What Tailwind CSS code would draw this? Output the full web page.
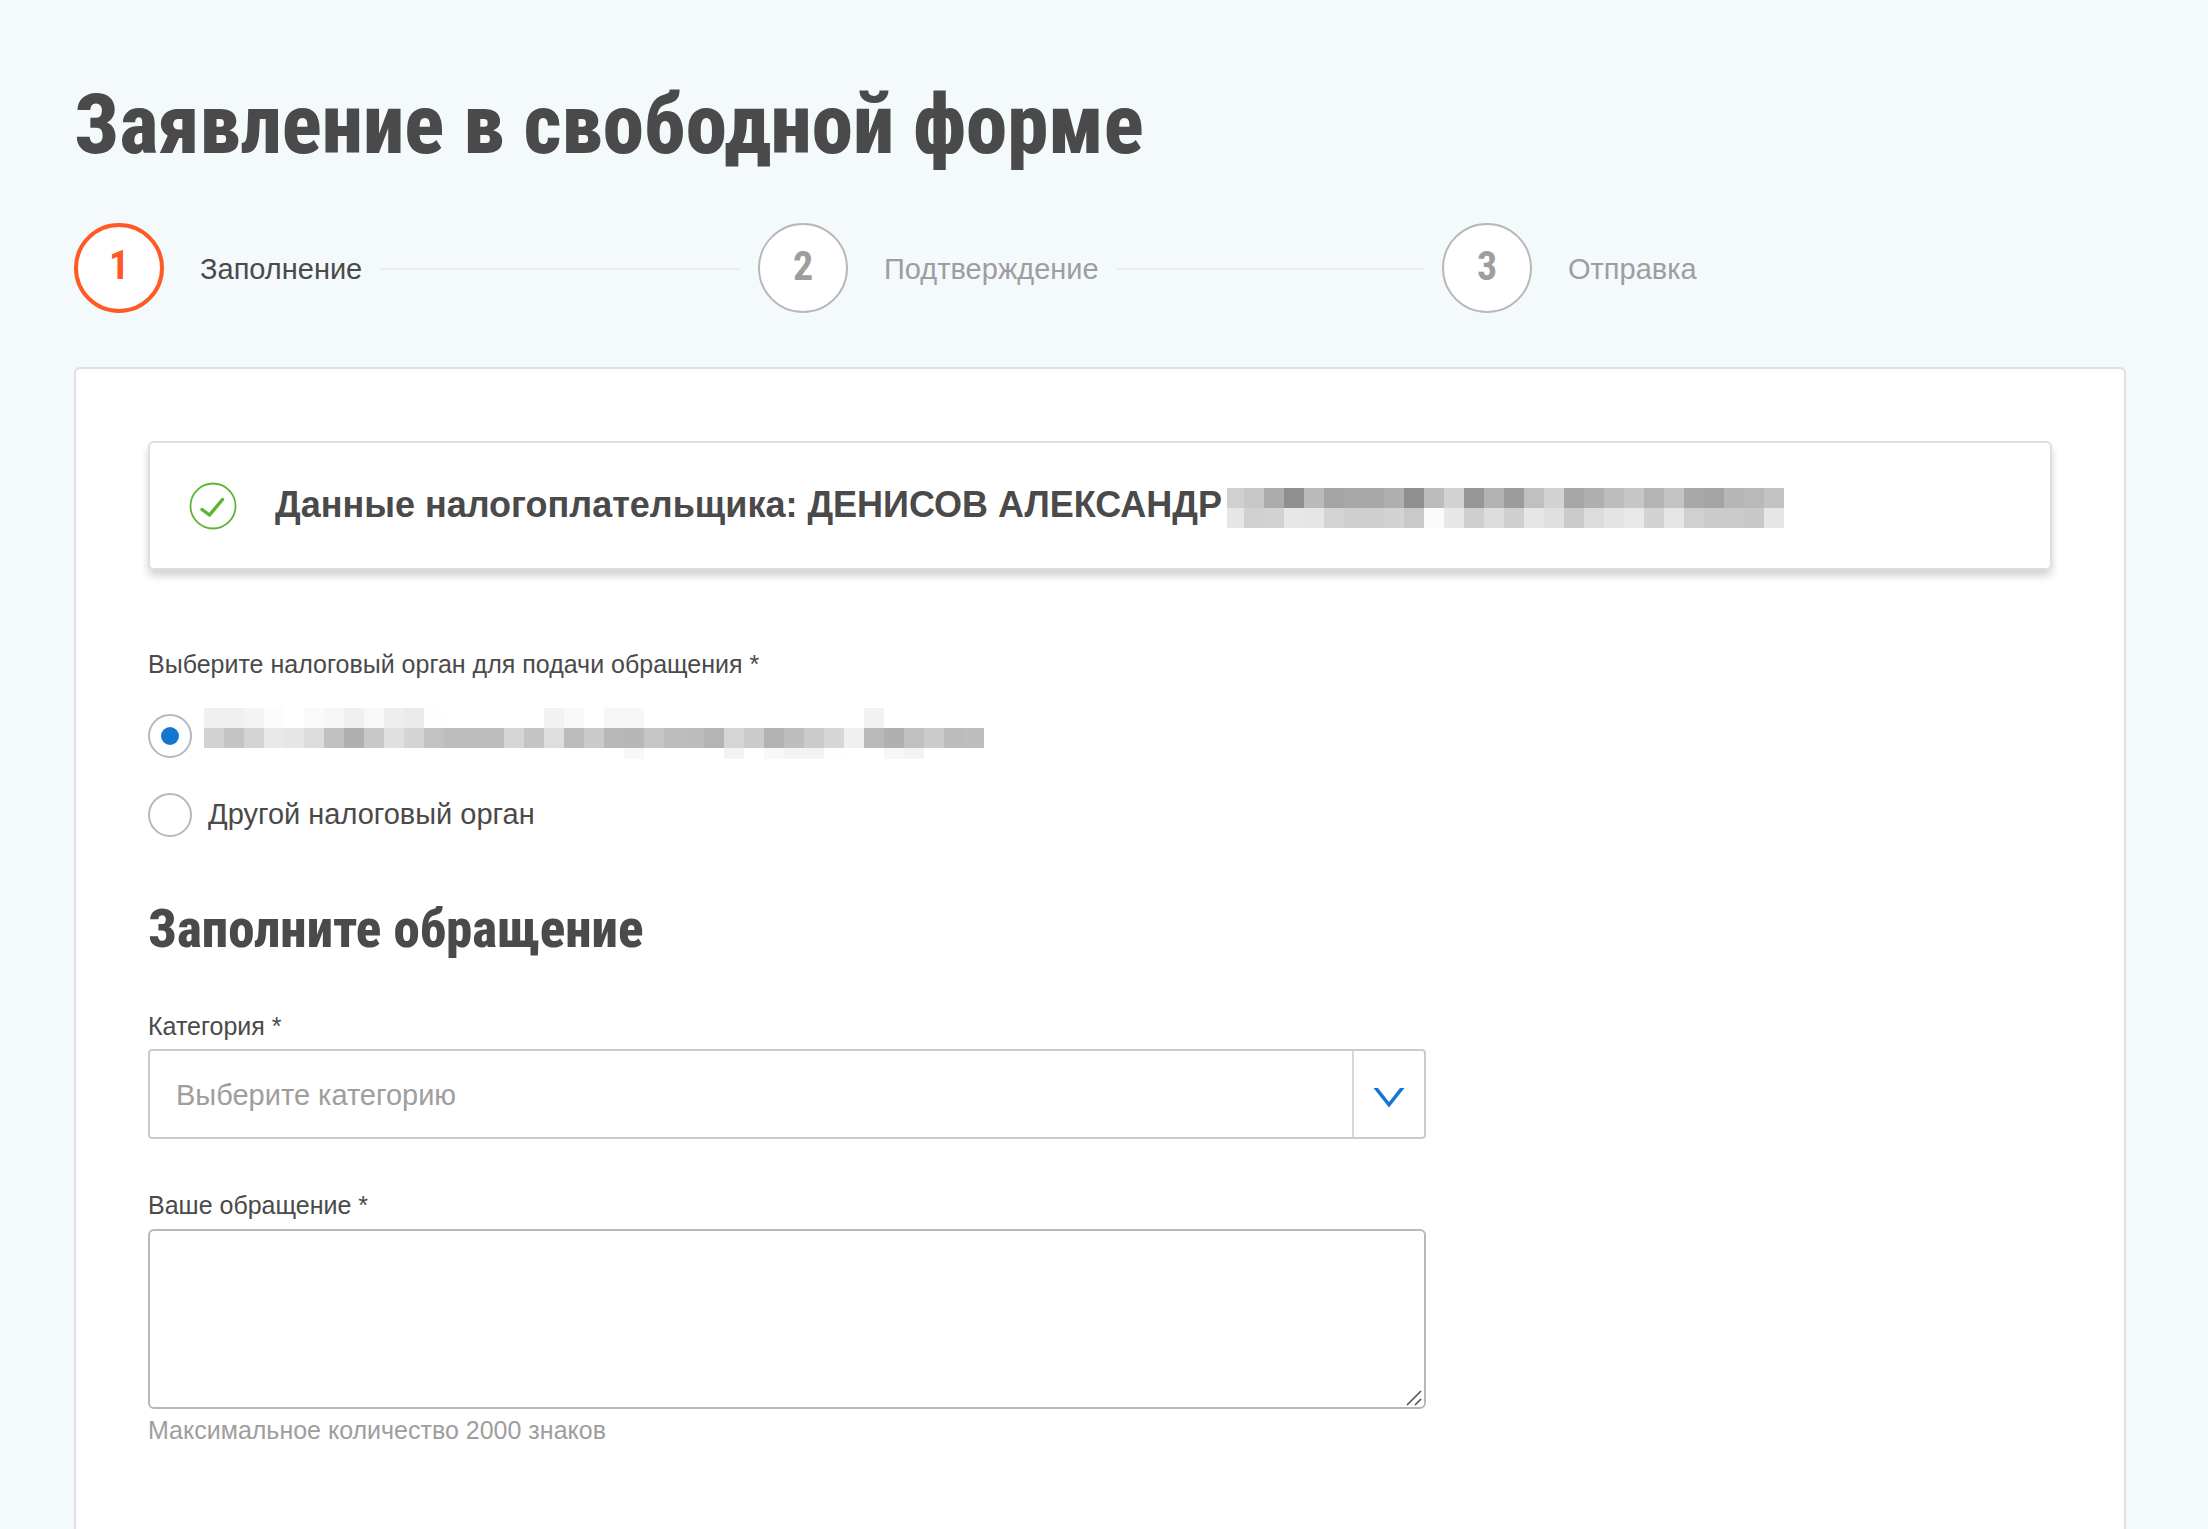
<!DOCTYPE html>
<html lang="ru">
<head>
  <meta charset="UTF-8">
  <meta name="viewport" content="width=device-width, initial-scale=1.0">
  <title>Заявление в свободной форме</title>
  <script src="https://cdn.jsdelivr.net/npm/@tailwindcss/browser@4"></script>
</head>
<body class="bg-[#f4f9fc] min-h-screen flex flex-col pt-[75px] pl-[74px] pr-[82px] font-['Liberation_Sans',Arial,sans-serif] text-[#4a4a4a]">

  <h1 class="font-['Roboto_Condensed','Liberation_Sans',sans-serif] font-extrabold text-[83px] leading-[100px]">Заявление в свободной форме</h1>

  <!-- Steps -->
  <ol class="grid grid-cols-3 mt-12 text-[29px] leading-8">
    <li class="flex items-center" aria-current="step">
      <span class="size-[90px] shrink-0 rounded-full border-4 border-[#ff5a26] bg-white flex items-center justify-center pb-1 font-['Roboto_Condensed','Liberation_Sans',sans-serif] font-bold text-[40px] text-[#ff5a26]">1</span>
      <div class="flex-1 flex items-center pt-[2px]">
        <span class="ml-9">Заполнение</span>
        <span class="h-[2px] flex-1 mx-[18px] bg-[#ebebeb]"></span>
      </div>
    </li>
    <li class="flex items-center text-[#9e9e9e]">
      <span class="size-[90px] shrink-0 rounded-full border-2 border-[#b8b8b8] bg-white flex items-center justify-center pb-[2px] font-['Roboto_Condensed','Liberation_Sans',sans-serif] font-bold text-[40px]">2</span>
      <div class="flex-1 flex items-center pt-[2px]">
        <span class="ml-9">Подтверждение</span>
        <span class="h-[2px] flex-1 mx-[18px] bg-[#ebebeb]"></span>
      </div>
    </li>
    <li class="flex items-center text-[#9e9e9e]">
      <span class="size-[90px] shrink-0 rounded-full border-2 border-[#b8b8b8] bg-white flex items-center justify-center pb-[2px] font-['Roboto_Condensed','Liberation_Sans',sans-serif] font-bold text-[40px]">3</span>
      <div class="flex-1 flex items-center pt-[2px]">
        <span class="ml-9">Отправка</span>
      </div>
    </li>
  </ol>

  <form class="mt-[54px] flex-1 bg-white border-2 border-b-0 border-[#dfe0e0] rounded-t-md px-[72px] pt-[72px] pb-[72px]">

    <!-- Taxpayer -->
    <div class="flex items-center border-2 border-[#dedede] rounded-md px-[39px] py-[38px] shadow-[0_6px_8px_rgba(0,0,0,0.18)]">
      <svg class="size-12 shrink-0" viewBox="0 0 48 48" fill="none" stroke="#5cb531" aria-hidden="true">
        <circle cx="24" cy="24" r="22.5" stroke-width="1.8"/>
        <path d="M13 27.5L20.5 33L33.5 17.5" stroke-width="3.4" stroke-linecap="round"/>
      </svg>
      <h2 class="ml-[38px] pb-[2px] font-bold text-[36px] leading-[47px] whitespace-nowrap">Данные налогоплательщика: ДЕНИСОВ АЛЕКСАНДР</h2>
      <div id="nameMask" class="ml-[5px] mt-1 flex flex-col" aria-hidden="true"></div>
    </div>

    <!-- Tax office -->
    <fieldset class="mt-[78px]">
      <legend class="text-[25px] leading-8">Выберите налоговый орган для подачи обращения *</legend>
      <div class="flex items-center h-[60px] mt-[26px]">
        <input type="radio" id="office1" name="office" checked aria-label="Налоговый орган" class="appearance-none size-11 shrink-0 rounded-full border-2 border-[#b8b8b8] bg-white flex items-center justify-center checked:before:block checked:before:size-[18px] checked:before:rounded-full checked:before:bg-[#1276d2]">
        <label for="office1" id="officeMask" class="ml-3 mb-[5px] h-[51px] overflow-hidden flex flex-col"></label>
      </div>
      <div class="flex items-center h-[60px] mt-[19px]">
        <input type="radio" id="office2" name="office" class="appearance-none size-11 shrink-0 rounded-full border-2 border-[#b8b8b8] bg-white flex items-center justify-center checked:before:block checked:before:size-[18px] checked:before:rounded-full checked:before:bg-[#1276d2]">
        <label for="office2" class="ml-4 pb-[2px] text-[29px] leading-8">Другой налоговый орган</label>
      </div>
    </fieldset>

    <h2 class="mt-12 font-['Roboto_Condensed','Liberation_Sans',sans-serif] font-extrabold text-[53px] leading-[72px]">Заполните обращение</h2>

    <div class="mt-[45px] max-w-[1278px]">
      <label for="category" class="block text-[25px] leading-8">Категория *</label>
      <div class="relative mt-[7px]">
        <select id="category" class="appearance-none block w-full h-[90px] rounded-sm border-2 border-[#cbcbcb] bg-white pt-1 pl-[26px] pr-20 text-[29px] text-[#9e9e9e]">
          <option>Выберите категорию</option>
        </select>
        <span class="absolute inset-y-[2px] right-[2px] w-[72px] border-l-2 border-[#d8d8d8] flex items-center justify-center pt-2 pointer-events-none">
          <svg class="w-8 h-5" viewBox="0 0 32 20" fill="#1276d2" aria-hidden="true"><path d="M0.500 0H5L16 14L27 0H31.500L16 19.500Z"/></svg>
        </span>
      </div>
    </div>

    <div class="mt-[50px] max-w-[1278px]">
      <label for="message" class="block text-[25px] leading-8">Ваше обращение *</label>
      <div class="relative mt-2">
        <textarea id="message" maxlength="2000" aria-describedby="messageHint" class="block w-full h-[180px] resize-none rounded-md border-2 border-[#b8b8b8] bg-white p-6 text-[29px] leading-9"></textarea>
        <svg class="absolute right-1 bottom-[3px] size-4 pointer-events-none" viewBox="0 0 16 16" stroke="#555" stroke-width="1.6" aria-hidden="true"><path d="M1 15L15 1M9 15L15 9"/></svg>
      </div>
      <p id="messageHint" class="mt-[5px] text-[25px] leading-8 text-[#9e9e9e]">Максимальное количество 2000 знаков</p>
    </div>
  </form>

  <script>
    // grey levels of the hidden personal data, one hex pair per cell
    const nameRows = [
      'd0 c8 ac 8f ba a4 a8 a8 b0 8f bc d3 96 b2 9c c0 d3 a6 b0 bd c6 b4 c4 a8 a4 b7 b9 c3',
      'e6 d0 d2 e7 e6 d4 cf cf d3 c9 fb e7 cf dd cf e6 e0 cb dc e3 e8 d3 e5 d0 cb cb c8 e6'
    ];
    const officeRows = [
      'f0 f0 f4 fc ff fa f6 f0 f8 ee ea fe ff ff ff ff ff f2 f8 ff f6 f7 ff ff ff ff ff ff ff ff ff ff ff f2 ff ff ff ff ff',
      'd2 c4 d4 e9 e6 dc c0 b0 c8 e0 d4 c2 bd bd bd d5 c4 de bb ca b8 b7 c6 bd bc b4 d5 cb b3 be cb d6 f0 b9 b0 c0 cc bc be',
      'ff ff ff ff ff ff ff ff ff ff ff ff ff ff ff ff ff ff ff ff ff f8 ff ff ff ff f3 ff f8 f3 f3 fe ff ff f7 f3 ff ff ff'
    ];

    function drawMask(id, rows, firstCell) {
      document.getElementById(id).innerHTML = rows.map(row =>
        '<span class="flex">' +
        row.split(' ').map((v, i) => `<span class="block h-5 ${i ? 'w-5' : firstCell}" style="background:#${v}${v}${v}"></span>`).join('') +
        '</span>'
      ).join('');
    }

    drawMask('nameMask', nameRows, 'w-[17px]');
    drawMask('officeMask', officeRows, 'w-5');
  </script>

</body>
</html>
